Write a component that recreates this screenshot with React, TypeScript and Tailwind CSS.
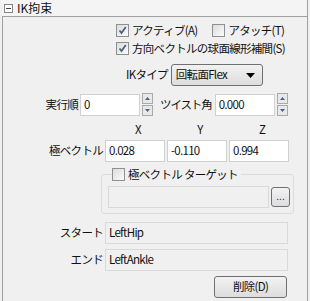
import React from "react";

function Check({ checked }: { checked?: boolean }) {
  return (
    <span className="w-[13px] h-[13px] border border-[#8e8f8f] bg-gradient-to-br from-[#dcdcdc] to-[#fbfbfb] flex items-center justify-center shrink-0">
      {checked && (
        <svg width="9" height="9" viewBox="0 0 9 9">
          <path d="M1.5 4.5 L3.5 7 L7.8 1" fill="none" stroke="#4d6185" strokeWidth="1.8" />
        </svg>
      )}
    </span>
  );
}

function Spin() {
  return (
    <div className="flex flex-col gap-px ml-[2px] shrink-0">
      <div className="w-[11px] h-[11px] border border-[#a9a9a9] bg-[#e8e8e8] flex items-center justify-center">
        <svg width="5" height="3" viewBox="0 0 5 3"><path d="M0 3 L2.5 0 L5 3Z" fill="#4d6185" /></svg>
      </div>
      <div className="w-[11px] h-[11px] border border-[#a9a9a9] bg-[#e8e8e8] flex items-center justify-center">
        <svg width="5" height="3" viewBox="0 0 5 3"><path d="M0 0 L2.5 3 L5 0Z" fill="#4d6185" /></svg>
      </div>
    </div>
  );
}

function Field({ value, w, ro }: { value: string; w: string; ro?: boolean }) {
  return (
    <div
      className={`${w} h-[22px] border flex items-center px-[3px] shrink-0 ${
        ro ? "bg-[#f0f0f0] border-[#d9d9d9]" : "bg-white border-[#d0d0d0]"
      }`}
    >
      {value}
    </div>
  );
}

export default function App() {
  return (
    <div
      className="w-[310px] h-[301px] bg-[#f0f0f0] text-[11.5px] leading-none text-[#111] flex flex-col whitespace-nowrap"
      style={{ fontFamily: '"Noto Sans CJK JP", "Noto Sans", sans-serif' }}
    >
      {/* header */}
      <div className="h-[17px] mx-[2px] flex items-center border-b border-[#a0a0a0] bg-[#f4f4f4] border-r text-[12px]">
        <span className="ml-[2px] w-[9px] h-[9px] border border-[#848484] bg-white flex items-center justify-center">
          <span className="w-[5px] h-px bg-[#444]" />
        </span>
        <span className="ml-[4px]">IK拘束</span>
      </div>

      <div className="flex-1 mx-[2px] border-l border-r border-[#a0a0a0] flex flex-col tracking-[-0.7px]">
        {/* checkboxes */}
        <div className="mt-[7px] flex items-center h-[13px] pl-[113px]">
          <Check checked />
          <span className="ml-[3px]">アクティブ(A)</span>
          <span className="ml-[15px]"><Check /></span>
          <span className="ml-[3px]">アタッチ(T)</span>
        </div>
        <div className="mt-[5px] flex items-center h-[13px] pl-[113px]">
          <Check checked />
          <span className="ml-[3px]">方向ベクトルの球面線形補間(S)</span>
        </div>

        {/* IK type */}
        <div className="mt-[9px] flex items-center h-[22px] pl-[123px]">
          <span className="shrink-0">IKタイプ</span>
          <div className="ml-[3px] w-[92px] h-[22px] border border-[#707070] rounded-[3px] bg-gradient-to-b from-[#f2f2f2] to-[#dddddd] flex items-center pl-[4px] pr-[7px] justify-between">
            <span>回転面Flex</span>
            <svg width="9" height="5" viewBox="0 0 9 5"><path d="M0 0 L9 0 L4.5 5Z" fill="#000" /></svg>
          </div>
        </div>

        {/* order / twist */}
        <div className="mt-[7px] flex items-center h-[23px]">
          <span className="w-[77px] text-right pr-[2px]">実行順</span>
          <Field value="0" w="w-[60px]" />
          <Spin />
          <span className="ml-[7px] mr-[3px] shrink-0 tracking-[-1.1px]">ツイスト角</span>
          <Field value="0.000" w="w-[60px]" />
          <Spin />
        </div>

        {/* XYZ */}
        <div className="mt-[8px] flex h-[12px] pl-[104px]">
          <span className="w-[62px] text-center">X</span>
          <span className="w-[62px] text-center">Y</span>
          <span className="w-[62px] text-center">Z</span>
        </div>

        {/* pole vector */}
        <div className="mt-[4px] flex items-center h-[22px]">
          <span className="w-[102px] text-right pr-[2px]">極ベクトル</span>
          <Field value="0.028" w="w-[60px]" />
          <span className="ml-[2px]"><Field value="-0.110" w="w-[60px]" /></span>
          <span className="ml-[2px]"><Field value="0.994" w="w-[60px]" /></span>
        </div>

        {/* group box */}
        <div className="mt-[12px] ml-[98px] w-[193px] h-[40px] border border-[#dcdcdc] rounded-[3px] relative">
          <div className="absolute -top-[7px] left-[10px] flex items-center bg-[#f0f0f0] pr-[3px] h-[13px]">
            <Check />
            <span className="ml-[3px]">極ベクトル ターゲット</span>
          </div>
          <div className="mt-[11px] ml-[6px] flex items-center">
            <Field value="" w="w-[161px]" ro />
            <div className="ml-[2px] w-[19px] h-[20px] border border-[#707070] rounded-[3px] bg-gradient-to-b from-[#f2f2f2] to-[#dddddd] flex items-end justify-center pb-[5px]">
              <span className="text-[10px] tracking-[0px] leading-none text-[#3030a0]">...</span>
            </div>
          </div>
        </div>

        {/* start / end */}
        <div className="mt-[8px] flex items-center h-[22px]">
          <span className="w-[102px] text-right pr-[2px]">スタート</span>
          <Field value="LeftHip" w="w-[183px]" ro />
        </div>
        <div className="mt-[5px] flex items-center h-[22px]">
          <span className="w-[102px] text-right pr-[2px]">エンド</span>
          <Field value="LeftAnkle" w="w-[183px]" ro />
        </div>

        {/* delete */}
        <div className="mt-[5px] flex pl-[211px]">
          <div className="w-[73px] h-[22px] border border-[#707070] rounded-[3px] bg-gradient-to-b from-[#f2f2f2] to-[#dddddd] flex items-center justify-center">
            削除(D)
          </div>
        </div>
      </div>
    </div>
  );
}
